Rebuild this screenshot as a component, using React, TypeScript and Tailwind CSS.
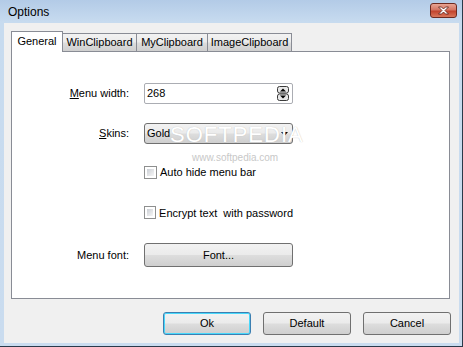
import React from 'react';

const font = { fontFamily: '"Liberation Sans", Arial, sans-serif' };

const btn =
  'flex items-center justify-center rounded-[3px] border border-[#707070] bg-[linear-gradient(to_bottom,#f2f2f2_0%,#ebebeb_48%,#dddddd_52%,#cfcfcf_100%)] text-[11px] text-black';

const Checkbox: React.FC<{ label: string }> = ({ label }) => (
  <label className="flex items-center gap-[3px]">
    <span className="w-[13px] h-[13px] border border-[#8e8f8f] bg-white p-[2px] flex">
      <span className="flex-1 bg-[linear-gradient(135deg,#cbcfd5,#f6f6f6)]" />
    </span>
    <span className="text-[11px] text-black whitespace-pre">{label}</span>
  </label>
);

const Spinner = () => (
  <svg width="12" height="15" viewBox="0 0 12 15">
    <rect x="0.5" y="0.5" width="11" height="6.5" rx="2" fill="#e8e8e8" stroke="#3b3b3b" />
    <rect x="0.5" y="8" width="11" height="6.5" rx="2" fill="#e8e8e8" stroke="#3b3b3b" />
    <path d="M3 5.5 L6 2.5 L9 5.5 Z" fill="#000" />
    <path d="M3 9.5 L6 12.5 L9 9.5 Z" fill="#000" />
  </svg>
);

const tabs = [
  { name: 'WinClipboard', w: 'w-[74px]' },
  { name: 'MyClipboard', w: 'w-[71px]' },
  { name: 'ImageClipboard', w: 'w-[84px]' },
];

const App: React.FC = () => {
  return (
    <div
      className="w-[463px] h-[347px] flex flex-col bg-[linear-gradient(to_bottom,#b3cbe7_0px,#c7dbef_22px,#cadcef_100%)] border-r border-b border-[#2a3a4a]"
      style={font}
    >
      {/* title bar */}
      <div className="h-[23px] flex items-center justify-between pl-[8px] pr-[5px]">
        <span className="text-[12px] text-black pt-[1px]">Options</span>
        <div className="w-[27px] h-[15px] rounded-[3px] border border-[#6d2a20] bg-[linear-gradient(to_bottom,#e8a493_0%,#d47563_45%,#c2432c_55%,#d9775b_100%)] flex items-center justify-center mb-[3px]">
          <svg width="13" height="9" viewBox="0 0 13 9">
            <path
              d="M1.5 1 L4.5 1 L6.5 3 L8.5 1 L11.5 1 L8 4.5 L11.5 8 L8.5 8 L6.5 6 L4.5 8 L1.5 8 L5 4.5 Z"
              fill="#fff"
              stroke="#5a1d14"
              strokeWidth="0.8"
            />
          </svg>
        </div>
      </div>

      {/* client area */}
      <div className="flex-1 ml-[4px] mr-[3px] mb-[3px] bg-[#f0f0f0] flex flex-col pl-[7px] pr-[9px] pt-[8px]">
        {/* tabs */}
        <div className="flex items-end h-[20px] relative z-10">
          <div className="h-[21px] mb-[-1px] w-[52px] border border-b-0 border-[#898c95] bg-white flex items-center justify-center text-[11px] text-black pb-[2px]">
            General
          </div>
          {tabs.map((t) => (
            <div
              key={t.name}
              className={`${t.w} h-[18px] border border-l-0 border-b-0 border-[#898c95] bg-[linear-gradient(to_bottom,#f2f2f2_0%,#ebebeb_48%,#dddddd_52%,#cfcfcf_100%)] flex items-center justify-center text-[11px] text-black`}
            >
              {t.name}
            </div>
          ))}
        </div>

        {/* panel */}
        <div className="h-[248px] border border-[#898c95] bg-white relative">
          <div className="grid grid-cols-[117px_149px] gap-x-[15px] items-center pt-[31px]">
            <span className="text-right text-[11px] text-black">
              <span className="underline">M</span>enu width:
            </span>
            <div className="h-[21px] border border-[#abadb3] rounded-[2px] bg-white flex items-center justify-between pl-[2px] pr-[3px] text-[11px] text-black">
              <span>268</span>
              <Spinner />
            </div>

            <span className="text-right text-[11px] text-black mt-[19px]">
              <span className="underline">S</span>kins:
            </span>
            <div className={`${btn} mt-[19px] h-[21px] !justify-between pl-[2px] pr-[4px]`}>
              <span>Gold</span>
              <svg width="7" height="4" viewBox="0 0 7 4">
                <path d="M0 0 L7 0 L3.5 4 Z" fill="#000" />
              </svg>
            </div>

            <span />
            <div className="mt-[20px]">
              <Checkbox label="Auto hide menu bar" />
            </div>

            <span />
            <div className="mt-[24px]">
              <Checkbox label="Encrypt text  with password" />
            </div>

            <span className="text-right text-[11px] text-black mt-[22px]">Menu font:</span>
            <div className={`${btn} mt-[22px] h-[24px]`}>Font...</div>
          </div>

          {/* watermark */}
          <span className="absolute left-[158px] top-[66px] text-[22px] tracking-[1px] text-white [text-shadow:0_0_1px_#b8b8b8] pointer-events-none">
            SOFTPEDIA
          </span>
          <span className="absolute left-[180px] top-[98px] text-[10px] text-[#c8c8c8] pointer-events-none">
            www.softpedia.com
          </span>
        </div>

        {/* bottom buttons */}
        <div className="flex justify-end gap-[12px] mt-[13px] mr-[-1px]">
          <div className={`${btn} w-[88px] h-[23px] !border-[#3c7fb1] shadow-[inset_0_0_0_1px_#48d8fb]`}>Ok</div>
          <div className={`${btn} w-[88px] h-[23px]`}>Default</div>
          <div className={`${btn} w-[88px] h-[23px]`}>Cancel</div>
        </div>
      </div>
    </div>
  );
};

export default App;
